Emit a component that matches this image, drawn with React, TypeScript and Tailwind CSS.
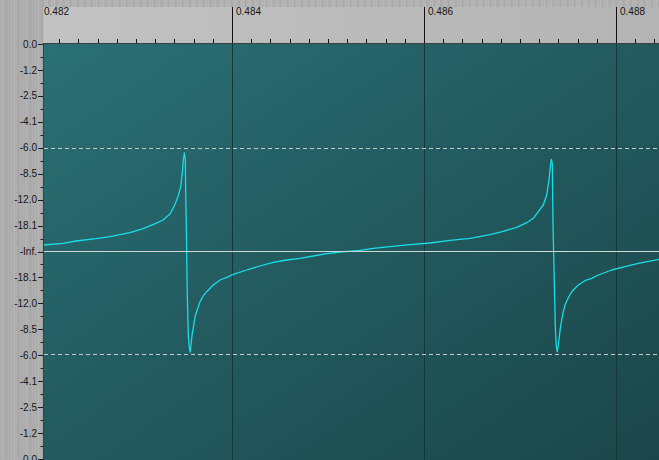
const wave: [number, number][] = [
  [44, 245], [63, 243.3], [76, 241], [96, 238.7], [110, 236.7], [130, 232.7], [143, 228.7],
  [156, 223.3], [163, 220], [170, 214], [174.7, 205], [178, 196.7], [180.7, 186.7],
  [182.3, 173.3], [183.3, 160], [184.3, 153], [185.3, 159], [185.6, 185], [186.5, 238],
  [187.3, 295], [188.3, 335], [189.3, 348], [190.3, 352], [191.3, 342], [192.3, 333],
  [193.3, 328], [194.3, 321.7], [195.3, 315.7], [196.7, 311.7], [198.3, 306.7], [200, 301.7],
  [203.3, 295.7], [206.7, 291.7], [210, 288.3], [213.3, 285], [220, 280], [226.7, 277.3],
  [233.3, 274.3], [246.7, 270], [260, 266], [273.3, 262.3], [286.7, 260], [300, 258.3],
  [313.3, 256], [326.7, 253.7], [340, 252], [360, 250.3], [373.3, 248.3], [390, 246.7],
  [410, 244.7], [430, 243], [450, 240.3], [470, 238.3], [490, 234.7], [503.3, 231.3],
  [516.7, 227.3], [526.7, 222.7], [533.3, 218.3], [538.3, 211.7], [543.3, 205], [546.7, 195],
  [549, 180], [550.3, 166.7], [551.3, 159.3], [552.3, 163.3], [553, 223], [554.3, 281.7],
  [555.3, 326.7], [556.3, 346.7], [557.3, 351.7], [558.3, 345], [559.3, 336.7], [560.3, 328.3],
  [561.7, 320], [563.3, 311.7], [565, 305], [568.3, 297.7], [571.7, 291.7], [575, 288.3],
  [578.3, 285], [585, 280.7], [591.7, 278.3], [598.3, 275], [611.7, 270], [625, 266.7],
  [638.3, 263.3], [659, 259.3],
];

const majors = [
  { x: 40, label: "0.482" },
  { x: 232, label: "0.484" },
  { x: 424, label: "0.486" },
  { x: 616, label: "0.488" },
];

const levels = ["0.0", "-1.2", "-2.5", "-4.1", "-6.0", "-8.5", "-12.0", "-18.1"];
const center = 251.5;
const step = 25.94;

const axisMarks = [
  ...levels.map((l, i) => ({ y: center - step * (8 - i), label: l })),
  { y: center, label: "-Inf." },
  ...levels
    .slice()
    .reverse()
    .map((l, i) => ({ y: center + step * (i + 1), label: l })),
];

const brushed =
  "bg-[image:repeating-linear-gradient(90deg,#b3b3b3_0px,#a5a5a5_1px,#b8b8b8_2px,#a9a9a9_4px,#b4b4b4_5px,#a2a2a2_6px,#b0b0b0_8px,#aaaaaa_11px,#b6b6b6_12px)]";

function Ruler() {
  const minors: number[] = [];
  for (let i = 0; i < 40; i++) {
    const x = 40 + i * 19.2;
    if (x > 43 && x < 660 && i % 10 !== 0) minors.push(x);
  }
  return (
    <svg width={616} height={36} viewBox="43 7 616 36" className="block">
      {majors.map((m) => (
        <g key={m.label}>
          {m.x > 43 && (
            <line x1={m.x + 0.5} y1={7} x2={m.x + 0.5} y2={43} stroke="#111" strokeWidth={1} />
          )}
          <text x={m.x + 4} y={14.8} fontSize={10} fill="#151515">
            {m.label}
          </text>
        </g>
      ))}
      {minors.map((x) => (
        <line key={x} x1={Math.round(x) + 0.5} y1={39} x2={Math.round(x) + 0.5} y2={43} stroke="#111" />
      ))}
    </svg>
  );
}

function Axis() {
  return (
    <svg width={43} height={417} viewBox="0 43 43 417" className="block overflow-visible">
      {axisMarks.map((m, i) => (
        <g key={i}>
          <line x1={38} y1={Math.round(m.y) + 0.5} x2={43} y2={Math.round(m.y) + 0.5} stroke="#1c1c1c" />
          {i < axisMarks.length - 1 && (
            <line
              x1={40.5}
              y1={Math.round(m.y + step / 2) + 0.5}
              x2={43}
              y2={Math.round(m.y + step / 2) + 0.5}
              stroke="#1c1c1c"
            />
          )}
          <text x={37} y={m.y + 3.6} fontSize={10} fill="#151515" textAnchor="end">
            {m.label}
          </text>
        </g>
      ))}
    </svg>
  );
}

function Waveform() {
  const pts = wave.map(([x, y]) => `${x},${y}`).join(" ");
  return (
    <svg width={615} height={416} viewBox="44 44 615 416" className="block">
      {[232, 424, 616].map((x) => (
        <line key={x} x1={x + 0.5} y1={44} x2={x + 0.5} y2={460} stroke="#173638" strokeWidth={1} />
      ))}
      <line x1={44} y1={148.5} x2={659} y2={148.5} stroke="#c4cbcb" strokeDasharray="4 3" />
      <line x1={44} y1={354.5} x2={659} y2={354.5} stroke="#c4cbcb" strokeDasharray="4 3" />
      <polyline points={pts} fill="none" stroke="#19dde8" strokeWidth={1.3} strokeLinejoin="round" />
      <line x1={44} y1={251.5} x2={659} y2={251.5} stroke="#cfd6d6" strokeWidth={1} />
    </svg>
  );
}

export default function App() {
  return (
    <div className="flex h-[460px] w-[659px] flex-col overflow-hidden font-['Liberation_Sans',Arial,sans-serif]">
      <div className="flex h-[43px]">
        <div className={`w-[43px] ${brushed}`} />
        <div className="flex flex-1 flex-col">
          <div className="h-[7px] bg-[image:repeating-linear-gradient(90deg,#b8b8b8_0px,#a3a3a3_1px,#c2c2c2_2px,#ababab_3px,#bdbdbd_5px,#a0a0a0_6px,#b6b6b6_7px)]" />
          <div className="flex-1 bg-gradient-to-r from-[#c2c2c2] to-[#b4b4b4]">
            <Ruler />
          </div>
        </div>
      </div>
      <div className="flex flex-1">
        <div className={`w-[43px] ${brushed}`}>
          <Axis />
        </div>
        <div className="flex-1 border-l border-t border-[#3a3f40] bg-gradient-to-br from-[#2a7075] via-[#225a5e] to-[#1b4649]">
          <Waveform />
        </div>
      </div>
    </div>
  );
}
